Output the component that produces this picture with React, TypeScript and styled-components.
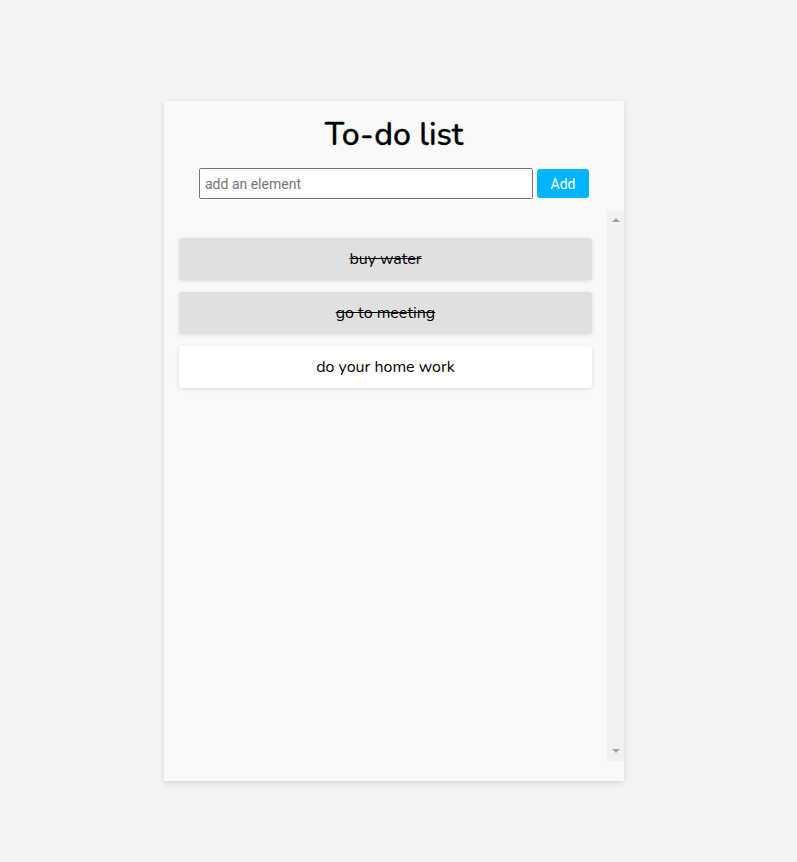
import React, { useState } from "react";
import styled, { createGlobalStyle } from "styled-components";

const Global = createGlobalStyle`
  html, body { margin: 0; padding: 0; }
  body {
    background: #f4f4f4;
    font-family: "Nunito", "Noto Sans", sans-serif;
  }
`;

const Page = styled.div`
  display: flex;
  justify-content: center;
  padding-top: 101px;
  padding-right: 9px;
  min-height: 862px;
  box-sizing: border-box;
`;

const Card = styled.div`
  width: 460px;
  height: 680px;
  background: #f9f9f9;
  box-shadow: 0 2px 6px rgba(0, 0, 0, 0.12);
  display: flex;
  flex-direction: column;
  box-sizing: border-box;
  padding-bottom: 20px;
`;

const Title = styled.h1`
  margin: 14px 0 0;
  font-family: "Nunito", "Noto Sans", sans-serif;
  font-weight: 500;
  font-size: 32px;
  line-height: 40px;
  text-align: center;
  color: #000;
  -webkit-text-stroke: 0.3px #000;
`;

const Form = styled.form`
  display: flex;
  justify-content: center;
  align-items: center;
  gap: 4px;
  margin-top: 13px;
`;

const Input = styled.input`
  width: 334px;
  height: 31px;
  box-sizing: border-box;
  border: 1px solid #767676;
  border-radius: 2px;
  background: #fff;
  padding: 0 5px;
  font-family: "Roboto", "Liberation Sans", sans-serif;
  font-size: 14px;
  color: #222;
  outline: none;
  &::placeholder { color: #757575; }
`;

const AddButton = styled.button`
  width: 52px;
  height: 29px;
  border: none;
  border-radius: 3px;
  background: #00b4ff;
  color: #fff;
  font-family: "Roboto", "Liberation Sans", sans-serif;
  font-size: 14px;
  cursor: pointer;
`;

const ScrollArea = styled.div`
  margin-top: 12px;
  flex: 1;
  min-height: 0;
  display: flex;
`;

const List = styled.ul`
  list-style: none;
  margin: 0;
  padding: 27px 15px 15px 15px;
  flex: 1;
  min-width: 0;
  overflow: hidden;
  display: flex;
  flex-direction: column;
  gap: 12px;
  box-sizing: border-box;
`;

const Track = styled.div`
  width: 17px;
  flex: none;
  background: #f1f1f1;
  display: flex;
  flex-direction: column;
  justify-content: space-between;
  align-items: center;
  padding: 7px 0 8px;
  box-sizing: border-box;
`;

const Arrow = styled.span<{ $down?: boolean }>`
  width: 0;
  height: 0;
  border-left: 4px solid transparent;
  border-right: 4px solid transparent;
  ${(p) =>
    p.$down
      ? "border-top: 4px solid #a3a3a3;"
      : "border-bottom: 4px solid #a3a3a3;"}
`;

const Item = styled.li<{ $done: boolean }>`
  flex: none;
  height: 42px;
  display: flex;
  align-items: center;
  justify-content: center;
  border-radius: 3px;
  background: ${(p) => (p.$done ? "#e0e0e0" : "#ffffff")};
  box-shadow: 0 1px 4px rgba(0, 0, 0, 0.12);
  font-size: 16px;
  color: #000;
  text-decoration: ${(p) => (p.$done ? "line-through" : "none")};
  cursor: pointer;
`;

export default function App() {
  const [items, setItems] = useState([
    { text: "buy water", done: true },
    { text: "go to meeting", done: true },
    { text: "do your home work", done: false },
  ]);
  const [value, setValue] = useState("");

  return (
    <>
      <Global />
      <Page>
        <Card>
          <Title>To-do list</Title>
          <Form
            onSubmit={(e) => {
              e.preventDefault();
              if (value.trim()) {
                setItems([...items, { text: value.trim(), done: false }]);
                setValue("");
              }
            }}
          >
            <Input
              placeholder="add an element"
              value={value}
              onChange={(e) => setValue(e.target.value)}
            />
            <AddButton type="submit">Add</AddButton>
          </Form>
          <ScrollArea>
            <List>
              {items.map((it, i) => (
                <Item
                  key={i}
                  $done={it.done}
                  onClick={() =>
                    setItems(items.map((x, j) => (j === i ? { ...x, done: !x.done } : x)))
                  }
                >
                  {it.text}
                </Item>
              ))}
            </List>
            <Track>
              <Arrow />
              <Arrow $down />
            </Track>
          </ScrollArea>
        </Card>
      </Page>
    </>
  );
}
